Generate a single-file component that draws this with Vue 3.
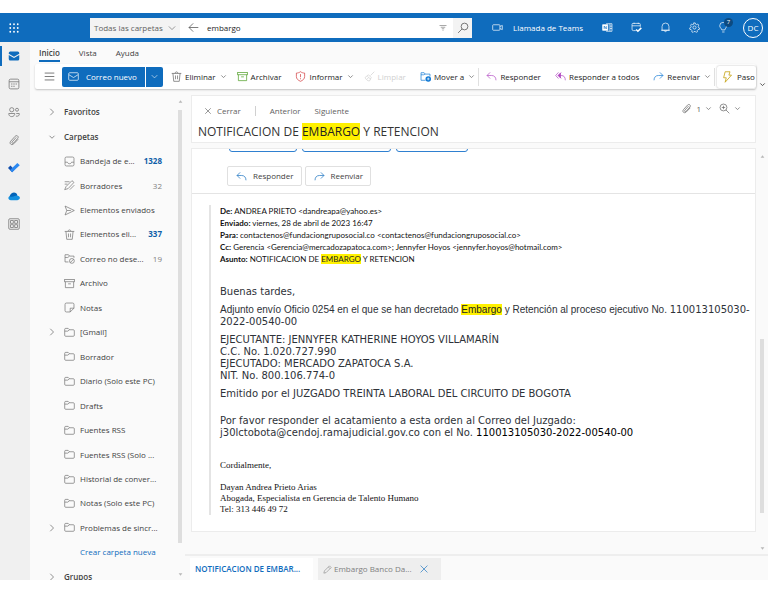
<script setup>
import { h, ref } from 'vue'

const glyphs = {
  waffle: '<g fill="currentColor" stroke="none"><circle cx="3" cy="3" r="1.2"/><circle cx="8" cy="3" r="1.2"/><circle cx="13" cy="3" r="1.2"/><circle cx="3" cy="8" r="1.2"/><circle cx="8" cy="8" r="1.2"/><circle cx="13" cy="8" r="1.2"/><circle cx="3" cy="13" r="1.2"/><circle cx="8" cy="13" r="1.2"/><circle cx="13" cy="13" r="1.2"/></g>',
  down: '<path d="M3 5.500 8 10.500 13 5.500"/>',
  right: '<path d="M4.500 1.500 11 8 4.500 14.500"/>',
  back: '<path d="M15 8H1.500M7.500 2 1.500 8l6 6"/>',
  filter: '<path d="M1 3h14M3.500 6.500h9M5.500 9.500h5M7 12.500h2" stroke-width="2"/>',
  search: '<circle cx="10" cy="6" r="4.500"/><path d="M6.800 9.200 1.500 14.500"/>',
  video: '<rect x="1" y="4" width="10.500" height="8" rx="1"/><path d="M11.500 6.500 15 5v6l-3.500-1.500"/>',
  onenote: '<path d="M6 2.500h8.500v11H6M11.500 2.500v11M11.500 6h3M11.500 9.500h3"/><rect x="1" y="4" width="7.500" height="8" fill="currentColor"/><path d="M3.200 10V6l3 4V6" stroke="#0f6cbd"/>',
  dayview: '<path d="M7 12.500H3.500a2 2 0 0 1-2-2v-7a1.500 1.500 0 0 1 1.500-1.500h9a1.500 1.500 0 0 1 1.500 1.500V7M1.500 5.500h12M4.500 1v2M10.500 1v2"/><path d="m7.500 11 2.500 2.500 5-5" stroke-width="2.200"/>',
  bell: '<path d="M3 12V6.500a5 5 0 0 1 10 0V12ZM1.500 12h13M6.500 12.500a1.500 1.500 0 0 0 3 0"/>',
  gear: '<circle cx="8" cy="8" r="2.300"/><path d="m6.700 1.300.4 1.700-1.700.8-1.600-.9-1.500 1.800.9 1.500L2.500 8l-1.600.7.5 2.200 1.800.1 1.100 1.500-.3 1.700 2 .9 1.200-1.200h1.900l1.300 1.200 1.900-.9-.3-1.800 1.100-1.400 1.800-.1.400-2.200-1.500-.7-.5-1.800.8-1.600-1.400-1.700-1.700.9-1.600-.8-.4-1.700Z"/>',
  bulb: '<path d="M5.500 11.500c0-2-3-3-3-6a5 5 0 0 1 10 0c0 3-2.500 4-2.500 6ZM6 14.500h3.500"/>',
  mailsolid: '<path fill="#0f6cbd" stroke="none" d="M3 2h10a2 2 0 0 1 2 2v1L8 9 1 5V4a2 2 0 0 1 2-2Zm-2 4.500L8 10.500l7-4V12a2 2 0 0 1-2 2H3a2 2 0 0 1-2-2Z"/>',
  mail: '<rect x="1" y="2.500" width="14" height="11" rx="1.500"/><path d="m1.500 5.500 6.500 4 6.500-4"/>',
  calendar: '<rect x="1.500" y="1.500" width="13" height="13" rx="2"/><path d="M1.500 5h13M4 8h2M7 8h2M10 8h2M4 11h2M7 11h2"/>',
  people: '<circle cx="5" cy="5" r="2.800"/><circle cx="12" cy="5" r="2"/><path d="M1 10h8c.5 5-8 6-8 0ZM11 10h4c.5 3-1.500 4-4.500 3.500"/>',
  clip: '<path d="m13.500 7-5.800 6c-3 3-6.700-.5-4-3.500L9.500 3c2.200-2.300 5.500.5 3.500 2.800L7.500 12c-1.500 1.500-3-.2-2-1.500L11 4.500"/>',
  todo: '<path fill="#124fae" stroke="none" d="M0 8 3.200 4.800l5.500 5.500-3.200 3.200Z"/><path fill="#2b88f0" stroke="none" d="m5.500 13.500-2.700-2.700 9.700-9.600 3.200 3.200Z"/>',
  cloud: '<path fill="#1490df" stroke="none" d="M4 13.500C-1 13-.5 7.500 4.500 7.500 6 2.500 12 3 12.500 7.500c4.500.2 4.500 5.500 0 6Z"/><path fill="#0364b8" stroke="none" d="M2 8.500C4 2 11.500 1.500 12.500 7.500 9 7 8 10 2 8.500Z"/>',
  apps: '<rect x="1" y="1" width="14" height="14" rx="1.500"/><rect x="3.500" y="3.500" width="3.500" height="3.500"/><rect x="9" y="3.500" width="3.500" height="3.500"/><rect x="3.500" y="9" width="3.500" height="3.500"/><rect x="9" y="9" width="3.500" height="3.500"/>',
  menu: '<path d="M1 3h14M1 8h14M1 13h14"/>',
  trash: '<path d="M1 3.500h14M6 3.500c0-3 4-3 4 0M2.800 3.500 4 15h8l1.200-11.500M6.500 6.500v5.500M9.500 6.500v5.500"/>',
  archive: '<rect x="1" y="2" width="14" height="3.500"/><path d="M2 5.500V14h12V5.500M6 8.500h4"/>',
  shield: '<path d="M8 1c2 1.500 4 2 6 2v5c0 3.500-2.500 5.500-6 7-3.500-1.500-6-3.500-6-7V3c2 0 4-.5 6-2ZM8 4.500V9M8 10.500V12"/>',
  broom: '<path d="m15 1-5.500 5.500M6.500 5.500l4 4L8 14.500c-3 0-5-2-6.500-5Zm-2 6 2-1.500M5 8l5 4"/>',
  move: '<path d="M8 13.500H1.500v-11h4.500l1.500 2h7V8M1.500 5.500h4l2-1"/><circle cx="12" cy="11.500" r="4" fill="currentColor" stroke="none"/><path d="M12 9.500v4M10 11.500h4" stroke="#fff"/>',
  reply: '<path d="M6 2 1.500 6.500 6 11M1.500 6.500H8c4 0 6.500 2.500 6.500 7"/>',
  replyall: '<path d="M5 2 1 6.500 5 11M9 2 5 6.500 9 11M5 6.500h4c4 0 6 2.500 6 7" /><path d="m8 3-3.500 3.500L8 10Z" fill="currentColor"/>',
  forward: '<path d="m10 2 4.500 4.500L10 11M14.500 6.500H8c-4 0-6.500 2.500-6.500 7"/>',
  bolt: '<path d="M5.500 1h6.500l-1.500 4.500h3.500L5.500 15l1.500-6H3.500Z"/>',
  inbox: '<rect x="1.500" y="1.500" width="13" height="13" rx="2"/><path d="M1.500 9H5c.5 3 5.500 3 6 0h3.500"/>',
  draft: '<path d="m1 14 2-4.500L11.500 1l3 2.500L6 12.500ZM1 2.500h7M1 6h4M8.500 14 15 7.500"/>',
  send: '<path d="M1.500 1.500 15 8 1.500 14.500 4 8ZM4 8h6"/>',
  junk: '<path d="M6.500 13H1.500V2.500h5l1.500 2h6.500V7M1.500 6.500h4l2.500-2"/><circle cx="11.500" cy="11.500" r="3.500"/><path d="m9 14 5-5"/>',
  note: '<path d="M9 14.500H3.500a2 2 0 0 1-2-2v-9a2 2 0 0 1 2-2h9a2 2 0 0 1 2 2V9ZM9 14.500V9h5.500"/>',
  folder: '<path d="M1 12V3.500A1.500 1.500 0 0 1 2.500 2H6l2 2h5.500A1.500 1.500 0 0 1 15 5.500V12a1.500 1.500 0 0 1-1.500 1.500h-11A1.500 1.500 0 0 1 1 12ZM1 6h4.500L8 4"/>',
  close: '<path d="m2.500 2.500 11 11M13.500 2.500l-11 11"/>',
  zoom: '<circle cx="6.500" cy="6.500" r="5"/><path d="m10 10 5 5M4 6.500h5M6.500 4v5"/>',
  pencil: '<path d="m1.500 14.500 1-4L11.500 1.500l3 3-9 9Zm8-11 3 3"/>',
  up: '<path d="M8 4 14 12H2Z" fill="currentColor" stroke="none"/>',
  caret: '<path d="M8 12 2 4h12Z" fill="currentColor" stroke="none"/>'
}

const Icon = (props) =>
  h('svg', {
    viewBox: '0 0 16 16',
    class: 'icon',
    'aria-hidden': 'true',
    innerHTML: glyphs[props.name]
  })
Icon.props = ['name']

const query = ref('embargo')

const rail = [
  { icon: 'mailsolid', label: 'Correo', active: true },
  { icon: 'calendar', label: 'Calendario' },
  { icon: 'people', label: 'Contactos' },
  { icon: 'clip', label: 'Archivos' },
  { icon: 'todo', label: 'To Do' },
  { icon: 'cloud', label: 'OneDrive' },
  { icon: 'apps', label: 'Aplicaciones' }
]

const actions = [
  { icon: 'trash', label: 'Eliminar', tone: 'grey', menu: true },
  { icon: 'archive', label: 'Archivar', tone: 'green' },
  { icon: 'shield', label: 'Informar', tone: 'red', menu: true },
  { icon: 'broom', label: 'Limpiar', tone: 'muted', disabled: true },
  { icon: 'move', label: 'Mover a', tone: 'blue', menu: true },
  { divider: true },
  { icon: 'reply', label: 'Responder', tone: 'purple' },
  { icon: 'replyall', label: 'Responder a todos', tone: 'purple' },
  { icon: 'forward', label: 'Reenviar', tone: 'blue', menu: true },
  { divider: true }
]

const tree = [
  { label: 'Favoritos', head: true, chevron: 'right' },
  { label: 'Carpetas', head: true, chevron: 'down' },
  { label: 'Bandeja de e...', icon: 'inbox', count: 1328, unread: true },
  { label: 'Borradores', icon: 'draft', count: 32 },
  { label: 'Elementos enviados', icon: 'send' },
  { label: 'Elementos eli...', icon: 'trash', count: 337, unread: true },
  { label: 'Correo no dese...', icon: 'junk', count: 19 },
  { label: 'Archivo', icon: 'archive' },
  { label: 'Notas', icon: 'note' },
  { label: '[Gmail]', icon: 'folder', chevron: 'right' },
  { label: 'Borrador', icon: 'folder' },
  { label: 'Diario (Solo este PC)', icon: 'folder' },
  { label: 'Drafts', icon: 'folder' },
  { label: 'Fuentes RSS', icon: 'folder' },
  { label: 'Fuentes RSS (Solo ...', icon: 'folder' },
  { label: 'Historial de conver...', icon: 'folder' },
  { label: 'Notas (Solo este PC)', icon: 'folder' },
  { label: 'Problemas de sincr...', icon: 'folder', chevron: 'right' },
  { label: 'Crear carpeta nueva', link: true },
  { label: 'Grupos', head: true, chevron: 'right' }
]
</script>

<template>
  <div class="page">
    <header class="topbar">
      <button class="waffle" aria-label="Iniciador de aplicaciones"><Icon name="waffle" /></button>
      <form class="search" role="search" @submit.prevent>
        <button type="button" class="scope">Todas las carpetas <Icon name="down" /></button>
        <button type="button" class="back" aria-label="Atrás"><Icon name="back" /></button>
        <input v-model="query" type="text" aria-label="Buscar" />
        <button type="button" class="filter" aria-label="Filtros"><Icon name="filter" /></button>
        <button type="submit" class="go" aria-label="Buscar"><Icon name="search" /></button>
      </form>
      <button class="teams"><Icon name="video" />Llamada de Teams</button>
      <nav class="tools" aria-label="Herramientas">
        <button aria-label="OneNote"><Icon name="onenote" /></button>
        <button aria-label="Mi día"><Icon name="dayview" /></button>
        <button aria-label="Notificaciones"><Icon name="bell" /></button>
        <button aria-label="Configuración"><Icon name="gear" /></button>
        <button class="tips" aria-label="Sugerencias"><Icon name="bulb" /><span class="badge">7</span></button>
        <button class="avatar">DC</button>
      </nav>
    </header>

    <div class="shell">
      <nav class="rail" aria-label="Aplicaciones">
        <button v-for="item in rail" :key="item.icon" :class="{ active: item.active }" :aria-label="item.label">
          <Icon :name="item.icon" />
        </button>
      </nav>

      <div class="main">
        <nav class="tabs">
          <a href="#" class="current">Inicio</a>
          <a href="#">Vista</a>
          <a href="#">Ayuda</a>
        </nav>
        <div class="ribbon-row">
          <div class="ribbon">
            <button class="menu" aria-label="Panel de navegación"><Icon name="menu" /></button>
            <div class="new">
              <button class="compose"><Icon name="mail" />Correo nuevo</button>
              <button class="split" aria-label="Más opciones"><Icon name="down" /></button>
            </div>
            <div class="actions">
              <template v-for="(a, i) in actions" :key="i">
                <span v-if="a.divider" class="divider"></span>
                <button v-else :class="[a.tone, { menued: a.menu }]" :disabled="a.disabled">
                  <Icon :name="a.icon" />{{ a.label }}<Icon v-if="a.menu" class="chev" name="down" />
                </button>
              </template>
            </div>
            <button class="steps"><Icon name="bolt" />Paso</button>
          </div>
          <button class="collapse" aria-label="Contraer cinta"><Icon name="down" /></button>
        </div>

        <div class="content">
          <aside class="side">
            <ul class="tree">
              <li v-for="row in tree" :key="row.label" :class="{ head: row.head, link: row.link }">
                <span class="twist"><Icon v-if="row.chevron" :name="row.chevron" /></span>
                <Icon v-if="row.icon" :name="row.icon" class="kind" />
                <a href="#">{{ row.label }}</a>
                <span v-if="row.count" class="count" :class="{ unread: row.unread }">{{ row.count }}</span>
              </li>
            </ul>
            <div class="scroll side-scroll">
              <Icon name="up" /><span class="thumb"></span><Icon name="caret" />
            </div>
          </aside>

          <section class="reader">
            <div class="reading">
              <div class="stack">
                <header class="subject">
                  <div class="nav">
                    <button class="shut"><Icon name="close" />Cerrar</button>
                    <span class="divider"></span>
                    <button>Anterior</button>
                    <button>Siguiente</button>
                    <span class="extras">
                      <button aria-label="Datos adjuntos"><Icon name="clip" />1<Icon class="chev" name="down" /></button>
                      <button aria-label="Zoom"><Icon name="zoom" /><Icon class="chev" name="down" /></button>
                    </span>
                  </div>
                  <h1>NOTIFICACION DE <mark>EMBARGO</mark> Y RETENCION</h1>
                </header>

                <article class="message">
                  <div class="suggestions"><span></span><span></span><span></span></div>
                  <div class="respond">
                    <button><Icon name="reply" />Responder</button>
                    <button><Icon name="forward" />Reenviar</button>
                  </div>
                  <div class="quote">
                    <div class="meta">
                      <b>De:</b> ANDREA PRIETO &lt;dandreapa@yahoo.es&gt;<br />
                      <b>Enviado:</b> viernes, 28 de abril de 2023 16:47<br />
                      <b>Para:</b> contactenos@fundaciongruposocial.co &lt;contactenos@fundaciongruposocial.co&gt;<br />
                      <b>Cc:</b> Gerencia &lt;Gerencia@mercadozapatoca.com&gt;; Jennyfer Hoyos &lt;jennyfer.hoyos@hotmail.com&gt;<br />
                      <b>Asunto:</b> NOTIFICACION DE <mark>EMBARGO</mark> Y RETENCION
                    </div>
                    <div class="body">
                      <p>Buenas tardes,</p>
                      <p><span class="arial">Adjunto envío Oficio 0254 en el que se han decretado <mark>Embargo</mark> y Retención al proceso ejecutivo No. </span>110013105030-<br />2022-00540-00</p>
                      <p>EJECUTANTE: JENNYFER KATHERINE HOYOS VILLAMARÍN<br />C.C. No. 1.020.727.990<br />EJECUTADO: MERCADO ZAPATOCA S.A.<br />NIT. No. 800.106.774-0</p>
                      <p>Emitido por el JUZGADO TREINTA LABORAL DEL CIRCUITO DE BOGOTA</p>
                      <p class="request">Por favor responder el acatamiento a esta orden al Correo del Juzgado:<br />j30lctobota@cendoj.ramajudicial.gov.co con el No. <span class="case">110013105030-2022-00540-00</span></p>
                    </div>
                    <div class="signature">
                      <p>Cordialmente,</p>
                      <p>Dayan Andrea Prieto Arias<br />Abogada, Especialista en Gerencia de Talento Humano<br />Tel: 313 446 49 72</p>
                    </div>
                  </div>
                </article>
              </div>
              <div class="scroll read-scroll">
                <Icon name="up" /><span class="thumb"></span><Icon name="caret" />
              </div>
            </div>
            <footer class="open-items">
              <button class="open current">NOTIFICACION DE EMBAR...</button>
              <button class="open"><Icon name="pencil" />Embargo Banco Da...<Icon name="close" class="dismiss" /></button>
            </footer>
          </section>
        </div>
      </div>
    </div>
  </div>
</template>

<style>
body {
  margin: 0;
  background: #fff;
}
</style>

<style scoped>
.page {
  box-sizing: border-box;
  height: 100vh;
  padding: 13px 0;
  display: flex;
  flex-direction: column;
  overflow: hidden;
  font: 8px/12px "Open Sans", "Noto Sans", sans-serif;
  color: #424242;
}
.page * {
  box-sizing: border-box;
}
button,
input {
  font: inherit;
  color: inherit;
  background: none;
  border: 0;
  padding: 0;
  margin: 0;
  display: inline-flex;
  align-items: center;
  white-space: nowrap;
}
a {
  color: inherit;
  text-decoration: none;
}
mark {
  background: #fff100;
  color: #222;
}
.icon {
  width: 11px;
  height: 11px;
  flex: none;
  fill: none;
  stroke: currentColor;
  stroke-width: 1;
}
.icon.chev {
  width: 7px;
  height: 7px;
  stroke-width: 2;
  color: #808080;
}

/* Top bar */
.topbar {
  flex: none;
  height: 29px;
  display: flex;
  align-items: center;
  background: #0f6cbd;
  color: #fff;
}
.waffle {
  width: 90px;
  padding-left: 8px;
  align-self: stretch;
}
.waffle .icon {
  width: 12px;
  height: 12px;
}
.search {
  flex: 0 1 382px;
  height: 20px;
  display: flex;
  background: #fff;
  color: #424242;
}
.scope {
  width: 90px;
  padding-left: 4px;
  gap: 4px;
  background: #f3f3f3;
  color: #616161;
}
.scope .icon {
  width: 10px;
  height: 10px;
}
.back {
  width: 27px;
  justify-content: center;
}
.search input {
  flex: 1;
  min-width: 0;
  color: #242424;
  outline: none;
}
.filter {
  width: 20px;
  justify-content: center;
  color: #a8a8a8;
}
.filter .icon {
  width: 8px;
  height: 8px;
}
.go {
  width: 19px;
  justify-content: center;
  background: #f3f3f3;
  color: #505050;
}
.go .icon {
  width: 12px;
  height: 12px;
}
.teams {
  margin-left: 20px;
  gap: 10px;
}
.tools {
  margin-left: auto;
  padding-right: 5px;
  display: flex;
  align-items: center;
  gap: 18px;
}
.tips {
  position: relative;
}
.badge {
  position: absolute;
  left: 6px;
  top: -4px;
  width: 9px;
  height: 9px;
  border-radius: 50%;
  background: #0c4a80;
  font-size: 6px;
  line-height: 9px;
  text-align: center;
}
.avatar {
  width: 20px;
  height: 20px;
  margin-left: -4px;
  justify-content: center;
  border: 1px solid #fff;
  border-radius: 50%;
}

/* Frame */
.shell {
  flex: 1;
  min-height: 0;
  display: flex;
}
.rail {
  flex: none;
  width: 30px;
  padding-top: 4px;
  background: #f0f0f0;
  display: flex;
  flex-direction: column;
  color: #707070;
}
.rail button {
  height: 28px;
  padding-left: 6px;
  border-left: 2px solid transparent;
}
.rail button.active {
  height: 20px;
  margin-bottom: 4px;
  border-color: #0f6cbd;
}
.rail .icon {
  width: 12px;
  height: 12px;
}
.main {
  flex: 1;
  min-width: 0;
  display: flex;
  flex-direction: column;
  background: #fafafa;
}
.tabs {
  flex: none;
  height: 22px;
  padding: 4px 0 0 9px;
  display: flex;
  align-items: flex-start;
  gap: 19px;
}
.tabs a {
  height: 16px;
  line-height: 14px;
}
.tabs .current {
  font-weight: 600;
  border-bottom: 2px solid #0f6cbd;
}

/* Ribbon */
.ribbon-row {
  flex: none;
  display: flex;
  padding-left: 5px;
}
.ribbon {
  flex: 1;
  min-width: 0;
  height: 25px;
  padding-left: 9px;
  display: flex;
  align-items: center;
  background: #fff;
  border-radius: 2px;
  box-shadow: 0 1px 2px rgba(0, 0, 0, 0.22);
}
.menu {
  width: 18px;
}
.new {
  height: 20px;
  display: flex;
  gap: 1px;
  color: #fff;
}
.new button {
  background: #0f6cbd;
}
.compose {
  width: 83px;
  padding-left: 6px;
  gap: 7px;
  border-radius: 2px 0 0 2px;
}
.split {
  width: 17px;
  justify-content: center;
  border-radius: 0 2px 2px 0;
}
.split .icon {
  width: 9px;
  height: 9px;
}
.actions {
  flex: 1;
  min-width: 0;
  padding-left: 1px;
  display: flex;
  justify-content: space-between;
  align-items: center;
}
.actions button {
  height: 20px;
  padding: 0 7px;
  gap: 3px;
  color: #242424;
}
.actions button.menued {
  padding-right: 3px;
}
.actions .chev {
  margin-left: 1px;
}
.divider {
  width: 1px;
  height: 18px;
  background: #e0e0e0;
}
.grey > .icon:first-child { color: #616161; }
.green > .icon:first-child { color: #4a9c1f; }
.red > .icon:first-child { color: #d13438; }
.blue > .icon:first-child { color: #0f78d4; }
.purple > .icon:first-child { color: #b146c2; }
.actions .muted { color: #d0d0d0; }
.steps {
  flex: none;
  width: 39px;
  height: 22px;
  margin-left: 2px;
  padding-left: 4px;
  gap: 4px;
  overflow: hidden;
  color: #242424;
  border-radius: 2px;
  box-shadow: 0 0 2px rgba(0, 0, 0, 0.3);
}
.steps .icon {
  width: 12px;
  height: 12px;
  color: #c19c00;
}
.collapse {
  flex: none;
  width: 12px;
  align-items: flex-end;
  justify-content: center;
  padding-bottom: 1px;
}
.collapse .icon {
  width: 7px;
  height: 7px;
  stroke-width: 2;
}

/* Folder tree */
.content {
  flex: 1;
  min-height: 0;
  display: flex;
}
.side {
  flex: none;
  width: 155px;
  display: flex;
  overflow: hidden;
}
.tree {
  flex: 1;
  min-width: 0;
  margin: 11px 0 -9px;
  padding: 0;
  list-style: none;
  display: flex;
  flex-direction: column;
}
.tree li {
  flex: 1;
  padding: 0 13px 0 18px;
  display: flex;
  align-items: center;
}
.tree a {
  white-space: nowrap;
}
.twist {
  width: 16px;
  display: flex;
}
.twist .icon {
  width: 8px;
  height: 8px;
  stroke-width: 2;
  color: #909090;
}
.kind {
  margin-right: 5px;
  color: #707070;
}
.head {
  font-weight: 600;
}
.link {
  color: #0f6cbd;
}
.link a {
  margin-left: 16px;
}
.count {
  margin-left: auto;
  color: #808080;
}
.count.unread {
  color: #0f5ea8;
  font-weight: 700;
}
.scroll {
  flex: none;
  display: flex;
  flex-direction: column;
  align-items: center;
  color: #b8b8b8;
}
.scroll .icon {
  width: 5px;
  height: 5px;
}
.thumb {
  width: 4px;
  background: #dedede;
}
.side-scroll {
  width: 10px;
  padding: 10px 0 3px;
}
.side-scroll .thumb {
  flex: 1;
  margin: 6px 0 29px;
}

/* Reading pane */
.reader {
  flex: 1;
  min-width: 0;
  display: flex;
  flex-direction: column;
}
.reading {
  flex: 1;
  min-height: 0;
  display: flex;
}
.stack {
  flex: 1;
  min-width: 0;
  padding: 6px 0 22px 6px;
  display: flex;
  flex-direction: column;
  gap: 5px;
}
.subject,
.message {
  background: #fff;
  border: 1px solid #ececec;
}
.subject {
  flex: none;
  height: 48px;
}
.nav {
  height: 29px;
  padding: 0 14px 0 12px;
  display: flex;
  align-items: center;
  gap: 14px;
  color: #616161;
}
.nav .divider {
  height: 10px;
  background: #d0d0d0;
}
.shut {
  gap: 5px;
}
.shut .icon {
  width: 8px;
  height: 8px;
  stroke-width: 1.3;
}
.extras {
  margin-left: auto;
  padding-bottom: 4px;
  display: flex;
  gap: 7px;
}
.extras button {
  gap: 4px;
}
h1 {
  margin: 0;
  padding-left: 6px;
  font-size: 12px;
  line-height: 13px;
  font-weight: 500;
  color: #333;
}
.message {
  flex: 1;
  min-height: 0;
  overflow: hidden;
}
.suggestions {
  height: 3px;
  padding-left: 37px;
  display: flex;
  align-items: flex-end;
  gap: 5px;
}
.suggestions span {
  height: 14px;
  border: 1px solid #2f80d0;
  border-radius: 3px;
  width: 68px;
}
.suggestions span:nth-child(2) {
  width: 89px;
}
.suggestions span:nth-child(3) {
  width: 72px;
}
.respond {
  height: 42px;
  padding: 14px 0 7px 35px;
  display: flex;
  gap: 3px;
  border-bottom: 1px solid #e4e4e4;
}
.respond button {
  height: 20px;
  padding: 0 7px 0 8px;
  gap: 6px;
  border: 1px solid #e0e0e0;
  border-radius: 2px;
}
.respond .icon {
  color: #0f6cbd;
}
.quote {
  margin: 11px 0 0 17px;
  padding-left: 9px;
  border-left: 2px solid #e4e4e4;
  color: #111;
}
.meta {
  font: 8px/12px Lato, "Open Sans", sans-serif;
}
.body {
  padding-top: 21px;
  font: 10px/12px "DejaVu Sans", sans-serif;
  color: #2e3238;
}
.body p {
  margin: 0 0 6px;
}
.body .request {
  margin-top: 15px;
}
.arial {
  font-family: "Liberation Sans", sans-serif;
}
.case {
  color: #000;
}
.signature {
  padding-top: 15px;
  font: 9px/11px "Liberation Serif", serif;
}
.signature p {
  margin: 0 0 11px;
}
.signature p:last-child {
  margin: 0;
}
.read-scroll {
  width: 12px;
  padding: 65px 0 3px;
}
.read-scroll .thumb {
  flex: 1;
  margin: 180px 0 33px;
}

/* Open items */
.open-items {
  flex: none;
  height: 26px;
  padding: 2px 0 0 5px;
  display: flex;
  gap: 5px;
  border-top: 2px solid #eee;
}
.open {
  width: 123px;
  padding: 0 5px;
  gap: 2px;
  background: #eee;
  color: #808080;
}
.open.current {
  background: #fff;
  color: #0f6cbd;
  font-weight: 600;
}
.open .icon {
  width: 9px;
  height: 9px;
}
.open .icon.dismiss {
  width: 10px;
  height: 10px;
  margin-left: 5px;
  color: #0f6cbd;
}
</style>
